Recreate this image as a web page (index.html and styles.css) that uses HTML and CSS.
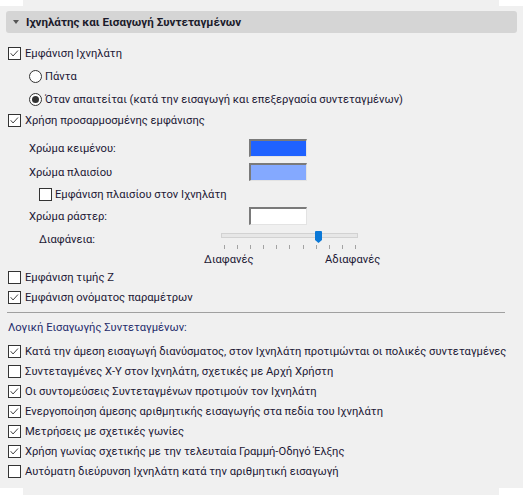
FILE: index.html
```html
<!DOCTYPE html>
<html lang="el">
<head>
<meta charset="utf-8">
<title>Ιχνηλάτης</title>
<link rel="stylesheet" href="styles.css">
</head>
<body>
<div class="tab tab-top"></div>
<div class="panel">
  <div class="header"><span class="tri"></span><span class="htext">Ιχνηλάτης και Εισαγωγή Συντεταγμένων</span></div>

  <div class="row r-show"><span class="cb"><svg viewBox="0 0 13 13"><path d="M2 6.2 L4.8 9.4 L10.6 3" /></svg></span><span>Εμφάνιση Ιχνηλάτη</span></div>
  <div class="row radio-row r-gap3"><span class="rb"></span><span>Πάντα</span></div>
  <div class="row radio-row r-gap3"><span class="rb on"></span><span>Όταν απαιτείται (κατά την εισαγωγή και επεξεργασία συντεταγμένων)</span></div>
  <div class="row r-gap1"><span class="cb"><svg viewBox="0 0 13 13"><path d="M2 6.2 L4.8 9.4 L10.6 3" /></svg></span><span>Χρήση προσαρμοσμένης εμφάνισης</span></div>

  <div class="color-row r-gap8"><span class="clabel">Χρώμα κειμένου:</span><span class="swatch sw-text"></span></div>
  <div class="color-row r-gap4"><span class="clabel">Χρώμα πλαισίου</span><span class="swatch sw-frame"></span></div>
  <div class="row sub-row r-gap2"><span class="cb"></span><span>Εμφάνιση πλαισίου στον Ιχνηλάτη</span></div>
  <div class="color-row r-gap2"><span class="clabel">Χρώμα ράστερ:</span><span class="swatch sw-raster"></span></div>

  <div class="slider-row">
    <span class="slabel">Διαφάνεια:</span>
    <div class="slider">
      <div class="track"></div>
      <div class="thumb"><svg viewBox="0 0 7 12"><path d="M0 1 Q0 0 1 0 L6 0 Q7 0 7 1 L7 9 L3.5 12 L0 9 Z"/></svg></div>
      <div class="ticks"><i></i><i></i><i></i><i></i><i></i><i></i><i></i><i></i><i></i><i></i><i></i></div>
    </div>
  </div>
  <div class="slider-labels"><span class="lbl-a">Διαφανές</span><span>Αδιαφανές</span></div>

  <div class="row r-z"><span class="cb"></span><span>Εμφάνιση τιμής Ζ</span></div>
  <div class="row"><span class="cb"><svg viewBox="0 0 13 13"><path d="M2 6.2 L4.8 9.4 L10.6 3" /></svg></span><span>Εμφάνιση ονόματος παραμέτρων</span></div>

  <div class="sep"></div>
  <div class="section-label">Λογική Εισαγωγής Συντεταγμένων:</div>

  <div class="list">
    <div class="row first"><span class="cb"><svg viewBox="0 0 13 13"><path d="M2 6.2 L4.8 9.4 L10.6 3" /></svg></span><span>Κατά την άμεση εισαγωγή διανύσματος, στον Ιχνηλάτη προτιμώνται οι πολικές συντεταγμένες</span></div>
    <div class="row"><span class="cb"></span><span>Συντεταγμένες X-Y στον Ιχνηλάτη, σχετικές με Αρχή Χρήστη</span></div>
    <div class="row"><span class="cb"><svg viewBox="0 0 13 13"><path d="M2 6.2 L4.8 9.4 L10.6 3" /></svg></span><span>Οι συντομεύσεις Συντεταγμένων προτιμούν τον Ιχνηλάτη</span></div>
    <div class="row"><span class="cb"><svg viewBox="0 0 13 13"><path d="M2 6.2 L4.8 9.4 L10.6 3" /></svg></span><span>Ενεργοποίηση άμεσης αριθμητικής εισαγωγής στα πεδία του Ιχνηλάτη</span></div>
    <div class="row"><span class="cb"><svg viewBox="0 0 13 13"><path d="M2 6.2 L4.8 9.4 L10.6 3" /></svg></span><span>Μετρήσεις με σχετικές γωνίες</span></div>
    <div class="row"><span class="cb"><svg viewBox="0 0 13 13"><path d="M2 6.2 L4.8 9.4 L10.6 3" /></svg></span><span>Χρήση γωνίας σχετικής με την τελευταία Γραμμή-Οδηγό Έλξης</span></div>
    <div class="row"><span class="cb"></span><span>Αυτόματη διεύρυνση Ιχνηλάτη κατά την αριθμητική εισαγωγή</span></div>
  </div>
</div>
<div class="tab tab-bottom"></div>
</body>
</html>
```

FILE: styles.css
```css
* { box-sizing: border-box; }
html, body {
  margin: 0;
  padding: 0;
  background: #ffffff;
}
body {
  width: 523px;
  height: 495px;
  overflow: hidden;
  font-family: Roboto, "Noto Sans", sans-serif;
  font-size: 11.2px;
  color: #1c1835;
}
.tab {
  background: #f0f0f0;
  margin: 0 24px 0 23px;
}
.tab-top { height: 6px; }
.tab-bottom { height: 7px; }
.panel {
  background: #f0f0f0;
  height: 482px;
  padding-top: 5px;
  display: flex;
  flex-direction: column;
}
.header {
  margin: 0 6px;
  height: 22px;
  background: #d5d5d5;
  border-radius: 3px;
  display: flex;
  align-items: center;
  padding-left: 7px;
  font-weight: 700;
  font-size: 11.6px;
  color: #1b1b2b;
  flex-shrink: 0;
}
.tri {
  width: 0;
  height: 0;
  border-left: 3.5px solid transparent;
  border-right: 3.5px solid transparent;
  border-top: 4px solid #555;
  margin-right: 7px;
}
.row {
  height: 20px;
  display: flex;
  align-items: center;
  padding-left: 8px;
  white-space: nowrap;
  flex-shrink: 0;
}
.r-show { margin-top: 10px; }
.r-gap1 { margin-top: 1px; }
.r-gap2 { margin-top: 2px; }
.r-gap3 { margin-top: 3px; }
.r-gap4 { margin-top: 4px; }
.r-gap8 { margin-top: 8px; }
.cb {
  width: 13px;
  height: 13px;
  border: 1px solid #333333;
  background: #ffffff;
  margin-right: 4px;
  flex-shrink: 0;
  display: flex;
}
.cb svg {
  width: 11px;
  height: 11px;
}
.cb path {
  fill: none;
  stroke: #333333;
  stroke-width: 1.1;
}
.radio-row { padding-left: 29px; }
.rb {
  width: 13px;
  height: 13px;
  border: 1px solid #333333;
  border-radius: 50%;
  background: #ffffff;
  margin-right: 3px;
  flex-shrink: 0;
  display: flex;
  align-items: center;
  justify-content: center;
}
.rb.on::after {
  content: "";
  width: 7px;
  height: 7px;
  border-radius: 50%;
  background: #333333;
}
.color-row {
  height: 20px;
  display: grid;
  grid-template-columns: 220px 58px;
  align-items: center;
  padding-left: 29px;
  flex-shrink: 0;
}
.swatch {
  height: 18px;
  border-top: 2px solid #7a7a7a;
  border-left: 2px solid #7a7a7a;
  border-right: 1px solid #e3e3e3;
  border-bottom: 1px solid #e3e3e3;
}
.sw-text { background: #1f62ff; }
.sw-frame { background: #84a9ff; }
.sw-raster { background: #ffffff; }
.sub-row { padding-left: 39px; }
.sub-row .cb { margin-right: 3px; }

.slider-row {
  height: 24px;
  margin-top: 2px;
  display: grid;
  grid-template-columns: 182px 137px;
  padding-left: 39px;
  flex-shrink: 0;
}
.slabel {
  align-self: center;
  padding-bottom: 2px;
}
.slider {
  position: relative;
  height: 24px;
}
.track {
  margin-top: 5px;
  height: 5px;
  background: #e7e7e7;
  border: 1px solid #d2d2d2;
}
.thumb {
  position: absolute;
  left: 94px;
  top: 3px;
  width: 7px;
  height: 12px;
  display: flex;
}
.thumb svg { width: 7px; height: 12px; }
.thumb path { fill: #0a78d7; }
.ticks {
  margin-top: 7px;
  height: 4px;
  display: flex;
  justify-content: space-between;
  padding: 0 2px 0 3px;
}
.ticks i {
  width: 1px;
  height: 4px;
  background: #a3a3a3;
}
.slider-labels {
  height: 14px;
  display: grid;
  grid-template-columns: 121px auto;
  padding-left: 204px;
  align-items: center;
  white-space: nowrap;
  flex-shrink: 0;
}
.row.r-z { margin-top: 1px; }
.sep {
  margin: 5px 18px 0 7px;
  height: 1px;
  background: #a0a0a0;
  flex-shrink: 0;
}
.section-label {
  margin-top: 4px;
  height: 20px;
  display: flex;
  align-items: center;
  padding-left: 8px;
  color: #1f2c6c;
  flex-shrink: 0;
}
.list {
  margin-top: 5px;
  display: flex;
  flex-direction: column;
}
.list .row.first { height: 19px; }
```
